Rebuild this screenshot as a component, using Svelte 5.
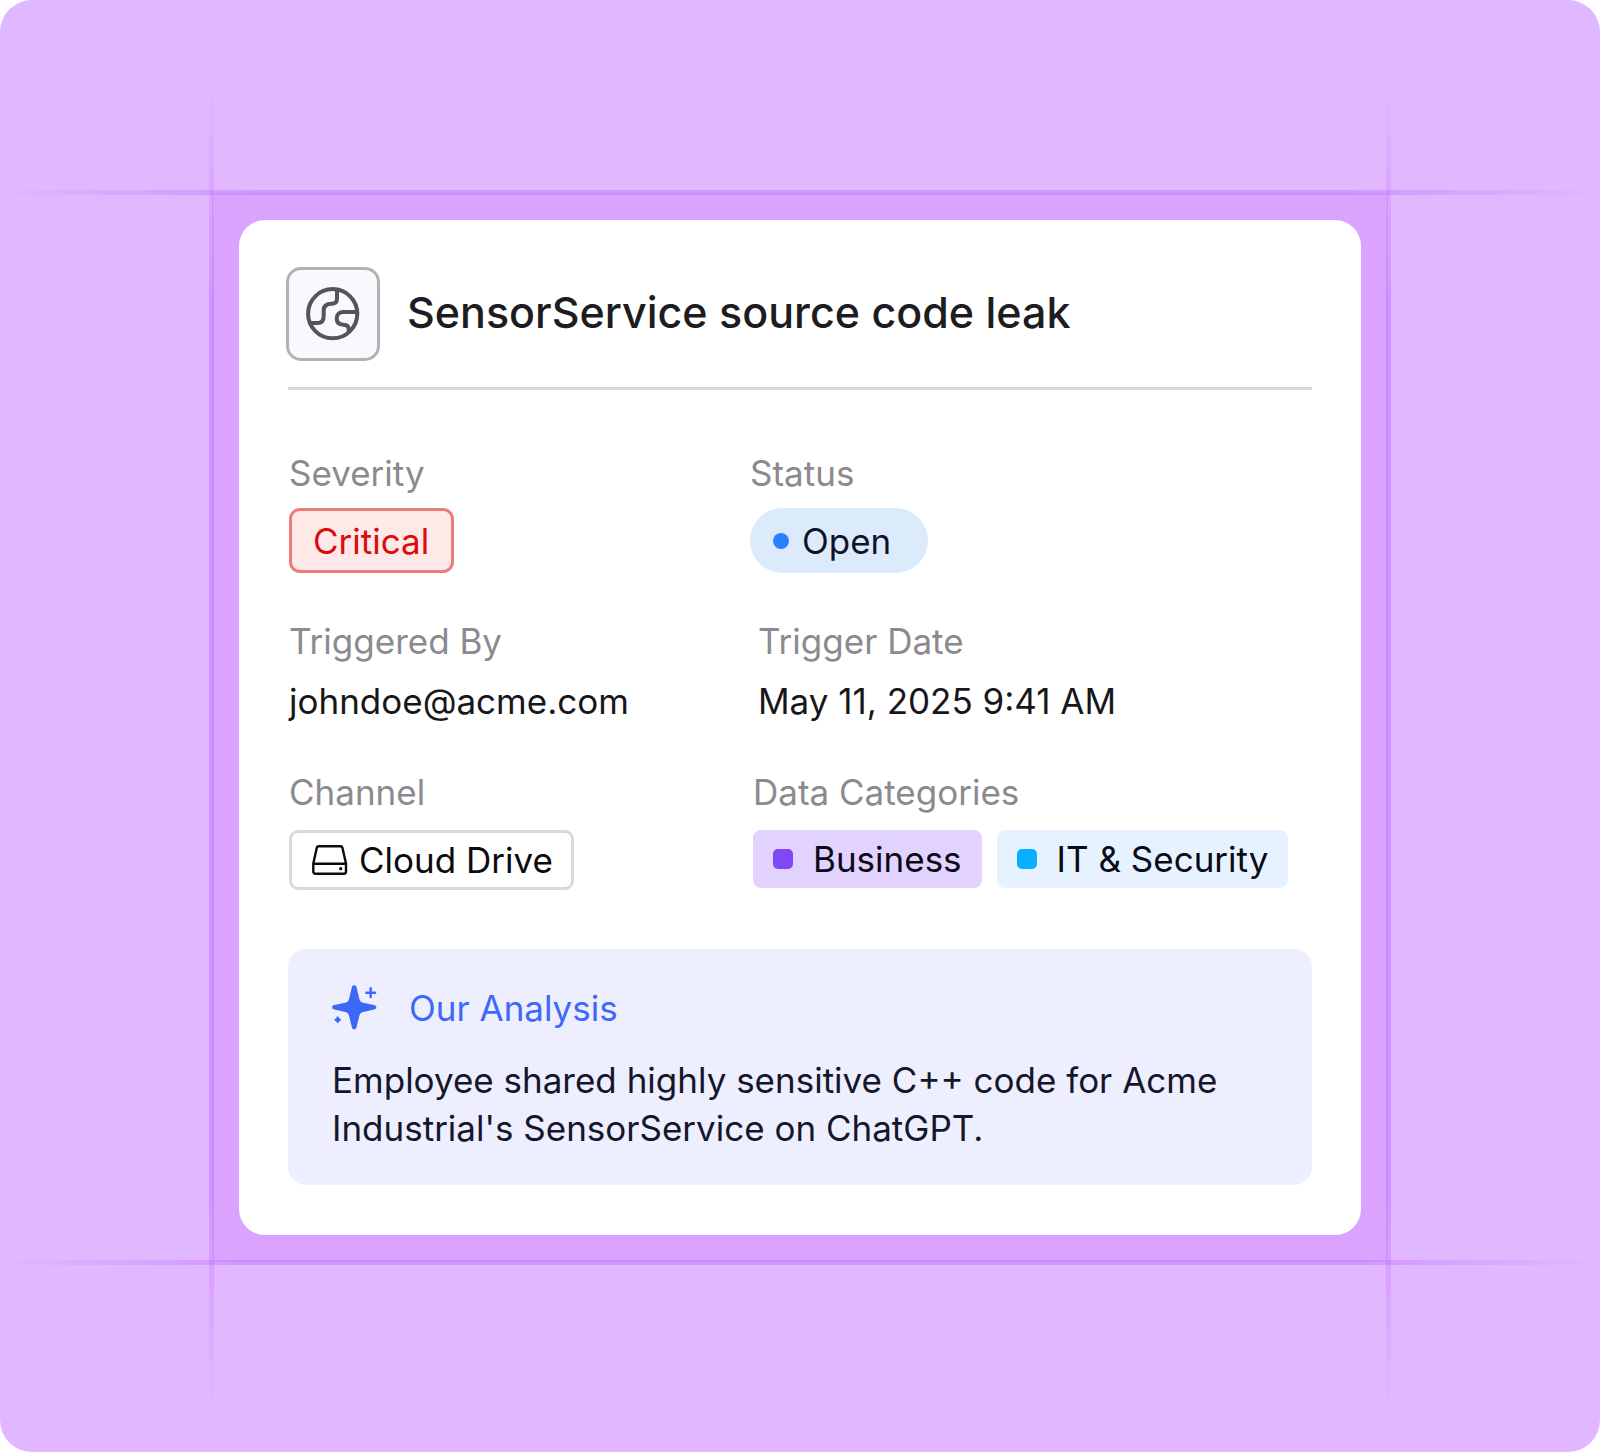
<script>
  const incident = {
    title: 'SensorService source code leak',
    severity: 'Critical',
    status: 'Open',
    user: 'johndoe@acme.com',
    date: 'May 11, 2025 9:41 AM',
    channel: 'Cloud Drive',
    analysis:
      "Employee shared highly sensitive C++ code for Acme Industrial's SensorService on ChatGPT."
  };
  const categories = [
    { name: 'Business', tone: 'violet' },
    { name: 'IT & Security', tone: 'sky' }
  ];
</script>

<main class="stage">
  <div class="frame">
    <span class="guide across top"></span>
    <span class="guide across bottom"></span>
    <span class="guide down left"></span>
    <span class="guide down right"></span>

    <article class="card">
      <header class="head">
        <span class="badge">
          <svg width="54" height="54" viewBox="0 0 54 54" fill="none" stroke="#555457" stroke-width="4" stroke-linecap="round" stroke-linejoin="round" aria-hidden="true">
            <circle cx="26.7" cy="26.7" r="24.6" />
            <path d="M31 3.500v8.300c0 3-1.500 4.900-5.300 4.900-5 0-8 2.300-8 6.500v5.500c0 5-2.200 7.300-6 7.300H4.500" />
            <path d="M51 25H37.500c-4.500 0-6.800 2.800-6.800 6.400 0 4 2.800 6.100 6.800 6.300 3.600.2 5.200 1.800 5.200 4.600v2.400" />
          </svg>
        </span>
        <h1>{incident.title}</h1>
      </header>

      <dl class="row first">
        <div class="field">
          <dt>Severity</dt>
          <dd><span class="severity">{incident.severity}</span></dd>
        </div>
        <div class="field">
          <dt>Status</dt>
          <dd><span class="status"><i class="dot"></i>{incident.status}</span></dd>
        </div>
      </dl>

      <dl class="row second">
        <div class="field">
          <dt>Triggered By</dt>
          <dd>{incident.user}</dd>
        </div>
        <div class="field">
          <dt>Trigger Date</dt>
          <dd>{incident.date}</dd>
        </div>
      </dl>

      <dl class="row third">
        <div class="field">
          <dt>Channel</dt>
          <dd>
            <span class="channel">
              <svg width="36" height="30" viewBox="0 0 36 30" fill="none" stroke="#0b0b0d" stroke-width="2.400" stroke-linejoin="round" aria-hidden="true">
                <path d="M6.700 1.300h21.800c1 0 1.700.5 1.900 1.400L34 18.500v8c0 1.400-.8 2.200-2.200 2.200H3.500c-1.400 0-2.200-.8-2.200-2.200v-8L4.800 2.700c.2-.9.900-1.400 1.900-1.400z" />
                <path d="M1.300 18.700H34" />
                <circle cx="28.700" cy="23.700" r="1.600" fill="#0b0b0d" stroke="none" />
              </svg>
              {incident.channel}
            </span>
          </dd>
        </div>
        <div class="field">
          <dt>Data Categories</dt>
          <dd class="tags">
            {#each categories as category}
              <span class="tag {category.tone}"><i class="square"></i>{category.name}</span>
            {/each}
          </dd>
        </div>
      </dl>

      <section class="analysis">
        <h2>
          <svg width="45" height="45" viewBox="0 0 45 45" fill="#3c68f8" aria-hidden="true">
            <path d="M22.200.3c1.300 0 2.100.8 2.400 2.200l2.700 11.200c.6 2.400 1.600 3.400 4 4L42 19.900c1.400.3 2.300 1.100 2.300 2.300s-.9 2.100-2.300 2.400l-10.700 2.500c-2.400.6-3.400 1.600-4 4l-2.700 10.800c-.3 1.400-1.100 2.300-2.400 2.300s-2.100-.9-2.400-2.300l-2.700-10.800c-.6-2.400-1.600-3.400-4-4L2.400 24.600C1 24.300.1 23.400.1 22.200s.9-2 2.300-2.300l10.700-2.200c2.400-.6 3.400-1.600 4-4l2.700-11.200C20.100 1.100 20.900.3 22.200.3z" />
            <path d="M38.700 3.300v8.800M34.300 7.700h8.800" fill="none" stroke="#3c68f8" stroke-width="2.400" stroke-linecap="round" />
            <path d="M5.700 33v3.600M3.900 34.800h3.600" fill="none" stroke="#3c68f8" stroke-width="2.800" stroke-linecap="round" />
          </svg>
          Our Analysis
        </h2>
        <p>{incident.analysis}</p>
      </section>
    </article>
  </div>
</main>

<style>
  :global(body) {
    background: #fff;
  }

  .stage {
    box-sizing: border-box;
    min-height: 100vh;
    padding: 193px 212px 190px;
    display: flex;
    overflow: hidden;
    border-radius: 32px;
    background: #e1b7ff;
    color: #17171a;
    font-family: Inter, 'Liberation Sans', sans-serif;
    font-size: 35px;
    line-height: 44px;
  }

  .frame {
    position: relative;
    flex: 1;
    min-width: 0;
    padding: 27px;
    background: #daa3ff;
  }

  .guide {
    position: absolute;
    --line: rgba(186, 100, 255, 0.4);
  }

  .across {
    left: -212px;
    right: -212px;
    height: 5px;
    background: linear-gradient(90deg, transparent, var(--line) 16%, var(--line) 84%, transparent);
  }

  .down {
    top: -106px;
    bottom: -148px;
    width: 5px;
    background: linear-gradient(180deg, transparent, var(--line) 16%, var(--line) 84%, transparent);
  }

  .top {
    top: -3px;
  }

  .bottom {
    bottom: -3px;
  }

  .left {
    left: -3px;
  }

  .right {
    right: -3px;
  }

  .card {
    position: relative;
    padding: 47px 49px 50px;
    border-radius: 26px;
    background: #fff;
  }

  .head {
    display: flex;
    align-items: center;
    gap: 27px;
    padding-bottom: 26px;
    border-bottom: 3px solid #d8d7da;
  }

  .badge {
    box-sizing: border-box;
    display: grid;
    place-items: center;
    width: 94px;
    height: 94px;
    margin-left: -2px;
    border: 3px solid #b2b1b4;
    border-radius: 15px;
    background: #faf8fc;
  }

  h1 {
    margin: 0;
    padding-bottom: 4px;
    color: #1d1c20;
    font-size: 43px;
    font-weight: 500;
    line-height: 56px;
  }

  .row {
    display: grid;
    margin: 0 1px;
  }

  .first {
    grid-template-columns: 461px 1fr;
    margin-top: 61px;
  }

  .second {
    grid-template-columns: 469px 1fr;
    margin-top: 46px;
  }

  .third {
    grid-template-columns: 464px 1fr;
    margin-top: 47px;
  }

  .field {
    display: flex;
    flex-direction: column;
    gap: 16px;
  }

  .first .field {
    gap: 13px;
  }

  dt {
    color: #8b8a8e;
  }

  dd {
    display: flex;
    margin: 0;
  }

  .severity,
  .status,
  .channel,
  .tag {
    box-sizing: border-box;
    display: flex;
    align-items: center;
    white-space: nowrap;
  }

  .severity {
    height: 65px;
    padding: 0 22px 0 21px;
    border: 3px solid #ec7c7c;
    border-radius: 11px;
    background: #ffe8e8;
    color: #d90d0a;
  }

  .status {
    height: 65px;
    gap: 13px;
    padding: 0 37px 0 23px;
    border-radius: 33px;
    background: #dcebfb;
    color: #10122a;
  }

  .dot {
    width: 16px;
    height: 16px;
    border-radius: 50%;
    background: #2b80ff;
  }

  .channel {
    height: 60px;
    gap: 11px;
    padding: 0 18px 0 20px;
    border: 3px solid #d9d8e0;
    border-radius: 9px;
    color: #0b0b0d;
  }

  .tags {
    gap: 15px;
  }

  .tag {
    height: 58px;
    gap: 20px;
    padding: 0 20px;
    border-radius: 8px;
    color: #0b0a14;
  }

  .square {
    width: 20px;
    height: 20px;
    border-radius: 5px;
  }

  .violet {
    background: #e1d2ff;
  }

  .violet .square {
    background: #8047f5;
  }

  .sky {
    background: #e6f2ff;
  }

  .sky .square {
    background: #08b0ff;
  }

  .analysis {
    margin-top: 59px;
    padding: 36px 44px 33px;
    border-radius: 18px;
    background: #edefff;
  }

  h2 {
    display: flex;
    align-items: center;
    gap: 32px;
    margin: 0;
    color: #3f68fa;
    font-size: 35px;
    font-weight: 400;
  }

  p {
    margin: 26px 0 0;
    color: #15162a;
    line-height: 48px;
  }
</style>
